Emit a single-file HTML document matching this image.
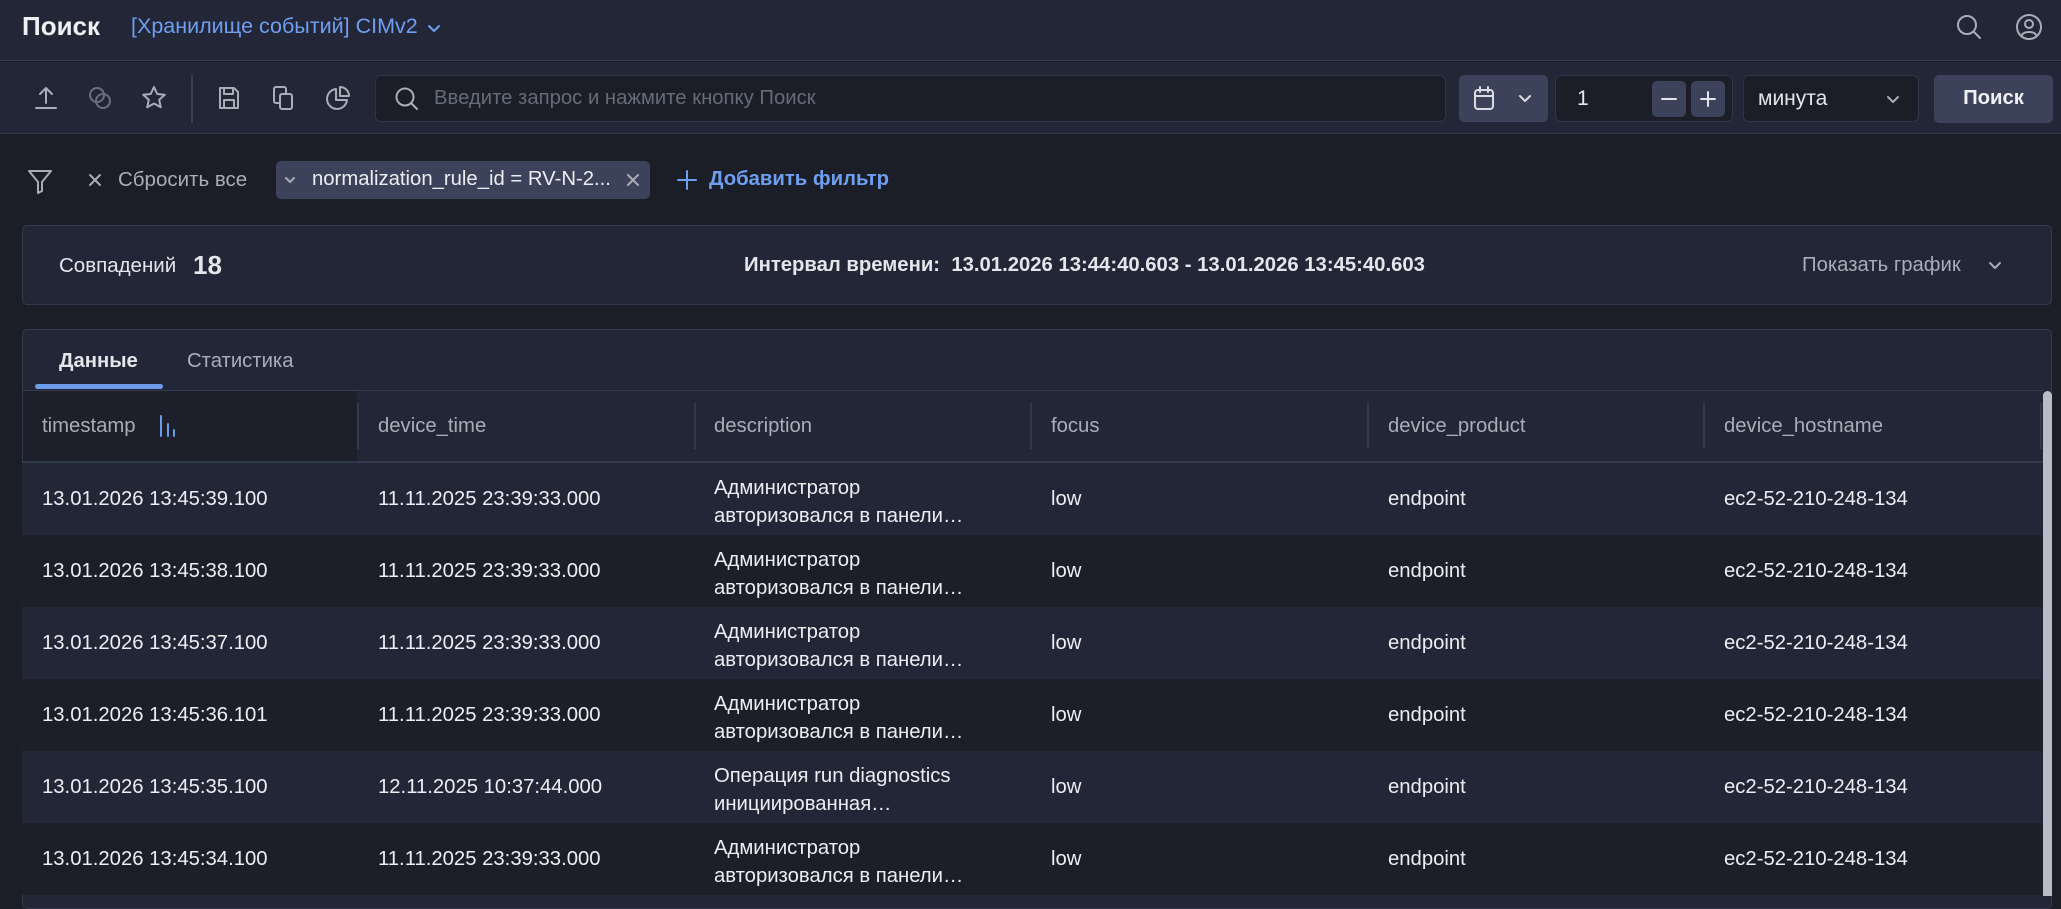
<!DOCTYPE html>
<html><head><meta charset="utf-8"><style>
*{box-sizing:border-box;margin:0;padding:0}
body{width:2061px;height:896px;overflow:hidden;background:#1b1d27;font-family:"Liberation Sans","Noto Sans CJK SC",sans-serif;color:#e4e6ec;position:relative}
.a{position:absolute}
svg{position:absolute;fill:none;stroke:#a9adb8;stroke-width:2;stroke-linecap:round;stroke-linejoin:round}
.hdr{left:0;top:0;width:2061px;height:61px;background:#232636;border-bottom:1px solid #343a4e}
.tb{left:0;top:62px;width:2061px;height:72px;background:#232636;border-bottom:1px solid #343a4e}
.inp{background:#1b1d27;border:1px solid #30364a;border-radius:6px}
.btn{background:#3c4259;border-radius:5px}
.t{white-space:nowrap}
.row{left:22px;width:2021px;height:72px}
.cell{position:absolute;font-size:20.3px;color:#eceef3;white-space:nowrap}
.hc{position:absolute;top:415px;font-size:20.3px;color:#a9adb8}
</style></head><body>
<div class="a hdr"></div>
<div class="a t" style="left:22px;top:11px;font-size:26px;font-weight:bold;color:#f0f1f5">Поиск</div>
<div class="a t" style="left:131px;top:14px;font-size:21.5px;color:#6f9ff0">[Хранилище событий] CIMv2</div>
<svg style="left:426px;top:20px" width="16" height="16" viewBox="0 0 16 16"><path d="M3 6l5 5 5-5" style="stroke:#6f9ff0"/></svg>
<svg style="left:1955px;top:13px" width="28" height="28" viewBox="0 0 28 28"><circle cx="12" cy="12" r="9"/><path d="M19 19l6 6"/></svg>
<svg style="left:2014px;top:12px" width="30" height="30" viewBox="0 0 30 30"><circle cx="15" cy="15" r="12"/><circle cx="15" cy="12" r="4"/><path d="M8 23c2-4 12-4 14 0"/></svg>

<div class="a tb"></div>
<svg style="left:32px;top:84px" width="28" height="28" viewBox="0 0 28 28"><path d="M14 4v15M8 10l6-6 6 6M4 24h20"/></svg>
<svg style="left:86px;top:84px" width="28" height="28" viewBox="0 0 28 28"><circle cx="11" cy="11" r="7" style="stroke:#6b6f7b"/><circle cx="17" cy="17" r="7" style="stroke:#6b6f7b"/></svg>
<svg style="left:140px;top:84px" width="28" height="28" viewBox="0 0 28 28"><path d="M14 3l3.3 7 7.5.8-5.6 5 1.6 7.5L14 19.5l-6.8 3.8 1.6-7.5-5.6-5 7.5-.8z"/></svg>
<div class="a" style="left:191px;top:75px;width:2px;height:48px;background:#3a3f52"></div>
<svg style="left:215px;top:84px" width="28" height="28" viewBox="0 0 28 28"><path d="M5 4h14l4 4v16H5z M9 4v6h9V4 M9 24v-8h10v8"/></svg>
<svg style="left:269px;top:84px" width="28" height="28" viewBox="0 0 28 28"><rect x="11" y="10" width="12" height="15" rx="2"/><path d="M17 10V5a2 2 0 0 0-2-2H7a2 2 0 0 0-2 2v12a2 2 0 0 0 2 2h4"/></svg>
<svg style="left:324px;top:84px" width="28" height="28" viewBox="0 0 28 28"><path d="M12 5a10 10 0 1 0 11 11H12z M16 3v9h9a9 9 0 0 0-9-9z"/></svg>
<div class="a inp" style="left:375px;top:75px;width:1071px;height:47px"></div>
<svg style="left:394px;top:86px" width="26" height="26" viewBox="0 0 26 26"><circle cx="11" cy="11" r="8.5"/><path d="M17 17l6 6"/></svg>
<div class="a t" style="left:434px;top:87px;font-size:20.3px;color:#666b79">Введите запрос и нажмите кнопку Поиск</div>
<div class="a btn" style="left:1459px;top:75px;width:89px;height:47px"></div>
<svg style="left:1471px;top:84px" width="26" height="28" viewBox="0 0 26 28"><rect x="4" y="6" width="18" height="19" rx="3" style="stroke:#d9dce3"/><path d="M4 12h18M9 3v5M17 3v5" style="stroke:#d9dce3"/></svg>
<svg style="left:1517px;top:91px" width="16" height="16" viewBox="0 0 16 16"><path d="M3 5l5 5 5-5" style="stroke:#d9dce3"/></svg>
<div class="a inp" style="left:1555px;top:75px;width:178px;height:47px"></div>
<div class="a t" style="left:1577px;top:87px;font-size:21px">1</div>
<div class="a btn" style="left:1652px;top:81px;width:34px;height:36px"></div>
<div class="a btn" style="left:1691px;top:81px;width:34px;height:36px"></div>
<svg style="left:1659px;top:89px" width="20" height="20" viewBox="0 0 20 20"><path d="M3 10h14" style="stroke:#e4e6ec"/></svg>
<svg style="left:1698px;top:89px" width="20" height="20" viewBox="0 0 20 20"><path d="M3 10h14M10 3v14" style="stroke:#e4e6ec"/></svg>
<div class="a inp" style="left:1743px;top:75px;width:176px;height:47px"></div>
<div class="a t" style="left:1758px;top:87px;font-size:21px">минута</div>
<svg style="left:1885px;top:92px" width="16" height="16" viewBox="0 0 16 16"><path d="M3 5l5 5 5-5"/></svg>
<div class="a btn" style="left:1934px;top:75px;width:119px;height:48px"></div>
<div class="a t" style="left:1934px;top:87px;width:119px;text-align:center;font-size:20.3px;font-weight:bold;color:#f0f1f5">Поиск</div>

<svg style="left:26px;top:167px" width="28" height="28" viewBox="0 0 28 28"><path d="M3 4h22l-9 11v9l-4 2V15z"/></svg>
<svg style="left:87px;top:172px" width="16" height="16" viewBox="0 0 16 16"><path d="M3 3l10 10M13 3L3 13"/></svg>
<div class="a t" style="left:118px;top:168px;font-size:20.5px;color:#a9adb8">Сбросить все</div>
<div class="a" style="left:276px;top:161px;width:374px;height:38px;background:#3c4259;border-radius:5px"></div>
<svg style="left:283px;top:173px" width="14" height="14" viewBox="0 0 14 14"><path d="M3 5l4 4 4-4"/></svg>
<div class="a t" style="left:312px;top:168px;font-size:20.3px;color:#eceef3">normalization_rule_id = RV-N-2...</div>
<svg style="left:625px;top:172px" width="16" height="16" viewBox="0 0 16 16"><path d="M3 3l10 10M13 3L3 13"/></svg>
<svg style="left:675px;top:168px" width="24" height="24" viewBox="0 0 24 24"><path d="M12 3v18M3 12h18" style="stroke:#6f9ff0"/></svg>
<div class="a t" style="left:709px;top:168px;font-size:20.3px;font-weight:bold;color:#6f9ff0">Добавить фильтр</div>

<div class="a" style="left:22px;top:225px;width:2030px;height:80px;background:#232636;border:1px solid #343a4e;border-radius:5px"></div>
<div class="a t" style="left:59px;top:254px;font-size:20.5px">Совпадений</div>
<div class="a t" style="left:193px;top:250px;font-size:26px;font-weight:bold">18</div>
<div class="a t" style="left:744px;top:254px;font-size:20.3px;font-weight:bold">Интервал времени:&nbsp; 13.01.2026 13:44:40.603 - 13.01.2026 13:45:40.603</div>
<div class="a t" style="left:1802px;top:254px;font-size:20.3px;color:#a9adb8">Показать график</div>
<svg style="left:1987px;top:258px" width="16" height="16" viewBox="0 0 16 16"><path d="M3 5l5 5 5-5"/></svg>

<div class="a" style="left:22px;top:329px;width:2030px;height:580px;background:#232636;border:1px solid #343a4e;border-radius:5px"></div>
<div class="a t" style="left:59px;top:350px;font-size:20.3px;font-weight:bold">Данные</div>
<div class="a t" style="left:187px;top:350px;font-size:20.3px;color:#a9adb8">Статистика</div>
<div class="a" style="left:35px;top:384px;width:128px;height:5px;background:#6b9bea;border-radius:3px"></div>
<div class="a" style="left:23px;top:390px;width:2020px;height:1px;background:#343a4e"></div>
<div class="a" style="left:23px;top:391px;width:334px;height:71px;background:#1d1f2a"></div>
<div class="a" style="left:23px;top:461px;width:2020px;height:2px;background:#343a4e"></div>
<div class="a" style="left:357px;top:403px;width:2px;height:46px;background:#343a4e"></div>
<div class="a" style="left:694px;top:403px;width:2px;height:46px;background:#343a4e"></div>
<div class="a" style="left:1030px;top:403px;width:2px;height:46px;background:#343a4e"></div>
<div class="a" style="left:1367px;top:403px;width:2px;height:46px;background:#343a4e"></div>
<div class="a" style="left:1703px;top:403px;width:2px;height:46px;background:#343a4e"></div>
<div class="a" style="left:2040px;top:403px;width:2px;height:46px;background:#343a4e"></div>
<div class="hc" style="left:42px">timestamp</div>
<svg style="left:158px;top:414px" width="22" height="24" viewBox="0 0 22 24"><path d="M3 2v20M10 10v12M16 16v6" style="stroke:#6b9bea"/></svg>
<div class="hc" style="left:378px">device_time</div>
<div class="hc" style="left:714px">description</div>
<div class="hc" style="left:1051px">focus</div>
<div class="hc" style="left:1388px">device_product</div>
<div class="hc" style="left:1724px">device_hostname</div>

<div class="a row" style="top:463px;background:#232636"></div>
<div class="a row" style="top:535px;background:#1c1e28"></div>
<div class="a row" style="top:607px;background:#232636"></div>
<div class="a row" style="top:679px;background:#1c1e28"></div>
<div class="a row" style="top:751px;background:#232636"></div>
<div class="a row" style="top:823px;background:#1c1e28"></div>

<div class="cell" style="left:42px;top:488px">13.01.2026 13:45:39.100</div><div class="cell" style="left:378px;top:488px">11.11.2025 23:39:33.000</div><div class="cell" style="left:714px;top:474px;line-height:28px">Администратор<br>авторизовался в панели…</div><div class="cell" style="left:1051px;top:488px">low</div><div class="cell" style="left:1388px;top:488px">endpoint</div><div class="cell" style="left:1724px;top:488px">ec2-52-210-248-134</div>
<div class="cell" style="left:42px;top:560px">13.01.2026 13:45:38.100</div><div class="cell" style="left:378px;top:560px">11.11.2025 23:39:33.000</div><div class="cell" style="left:714px;top:546px;line-height:28px">Администратор<br>авторизовался в панели…</div><div class="cell" style="left:1051px;top:560px">low</div><div class="cell" style="left:1388px;top:560px">endpoint</div><div class="cell" style="left:1724px;top:560px">ec2-52-210-248-134</div>
<div class="cell" style="left:42px;top:632px">13.01.2026 13:45:37.100</div><div class="cell" style="left:378px;top:632px">11.11.2025 23:39:33.000</div><div class="cell" style="left:714px;top:618px;line-height:28px">Администратор<br>авторизовался в панели…</div><div class="cell" style="left:1051px;top:632px">low</div><div class="cell" style="left:1388px;top:632px">endpoint</div><div class="cell" style="left:1724px;top:632px">ec2-52-210-248-134</div>
<div class="cell" style="left:42px;top:704px">13.01.2026 13:45:36.101</div><div class="cell" style="left:378px;top:704px">11.11.2025 23:39:33.000</div><div class="cell" style="left:714px;top:690px;line-height:28px">Администратор<br>авторизовался в панели…</div><div class="cell" style="left:1051px;top:704px">low</div><div class="cell" style="left:1388px;top:704px">endpoint</div><div class="cell" style="left:1724px;top:704px">ec2-52-210-248-134</div>
<div class="cell" style="left:42px;top:776px">13.01.2026 13:45:35.100</div><div class="cell" style="left:378px;top:776px">12.11.2025 10:37:44.000</div><div class="cell" style="left:714px;top:762px;line-height:28px">Операция run diagnostics<br>инициированная…</div><div class="cell" style="left:1051px;top:776px">low</div><div class="cell" style="left:1388px;top:776px">endpoint</div><div class="cell" style="left:1724px;top:776px">ec2-52-210-248-134</div>
<div class="cell" style="left:42px;top:848px">13.01.2026 13:45:34.100</div><div class="cell" style="left:378px;top:848px">11.11.2025 23:39:33.000</div><div class="cell" style="left:714px;top:834px;line-height:28px">Администратор<br>авторизовался в панели…</div><div class="cell" style="left:1051px;top:848px">low</div><div class="cell" style="left:1388px;top:848px">endpoint</div><div class="cell" style="left:1724px;top:848px">ec2-52-210-248-134</div>

<div class="a" style="left:2043px;top:391px;width:9px;height:505px;background:#b9bcc6;border-radius:5px 5px 0 0"></div>
</body></html>
